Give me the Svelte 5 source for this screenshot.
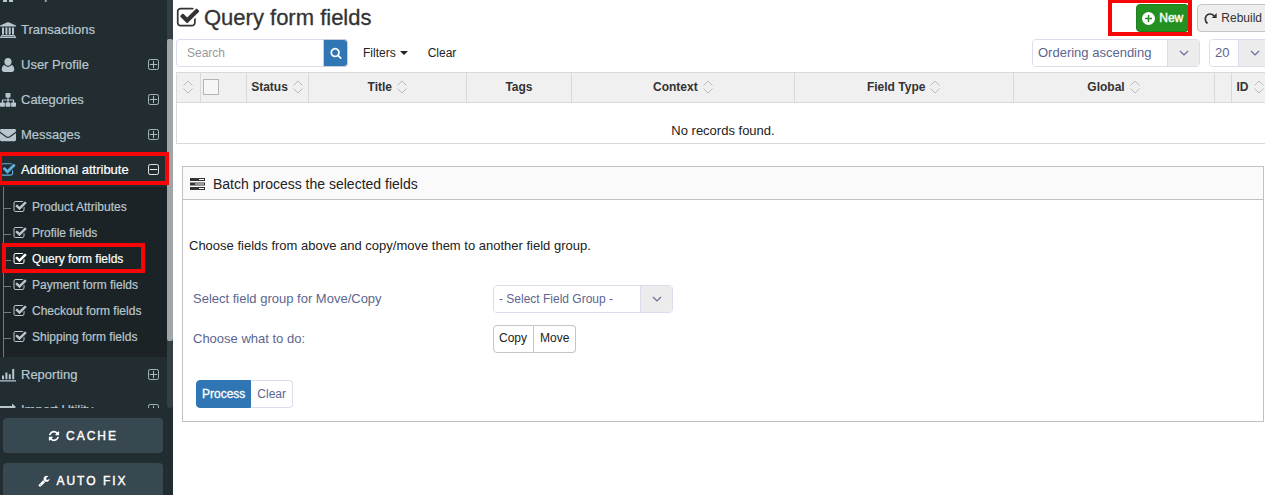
<script>
  const paths = {
    check: 'M1472 930v318q0 119-84.5 203.5t-203.5 84.5h-832q-119 0-203.5-84.5t-84.5-203.5v-832q0-119 84.5-203.5t203.5-84.5h832q63 0 117 25 15 7 18 23 3 17-9 29l-49 49q-10 10-23 10-3 0-9-2-23-6-45-6h-832q-66 0-113 47t-47 113v832q0 66 47 113t113 47h832q66 0 113-47t47-113v-254q0-13 9-22l64-64q10-10 23-10 6 0 12 3 20 8 20 29zm231-489l-814 814q-24 24-57 24t-57-24l-430-430q-24-24-24-57t24-57l110-110q24-24 57-24t57 24l263 263 647-647q24-24 57-24t57 24l110 110q24 24 24 57t-24 57z',
    refresh: 'M1639 1056q0 5-1 7-64 268-268 434.5t-478 166.5q-146 0-282.5-55t-243.5-157l-129 129q-19 19-45 19t-45-19-19-45v-448q0-26 19-45t45-19h448q26 0 45 19t19 45-19 45l-137 137q71 66 161 102t187 36q134 0 250-65t186-179q11-17 53-117 8-23 30-23h192q13 0 22.5 9.5t9.5 22.5zm25-800v448q0 26-19 45t-45 19h-448q-26 0-45-19t-19-45 19-45l138-138q-148-137-349-137-134 0-250 65t-186 179q-11 17-53 117-8 23-30 23h-199q-13 0-22.5-9.5t-9.5-22.5v-7q65-268 270-434.5t480-166.5q146 0 284 55.5t245 156.5l130-129q19-19 45-19t45 19 19 45z',
    wrench: 'M448 1472q0-26-19-45t-45-19-45 19-19 45 19 45 45 19 45-19 19-45zm644-420l-682 682q-37 37-90 37-52 0-91-37l-106-108q-38-36-38-90 0-53 38-91l681-681q39 98 114.5 173.5t173.5 114.5zm634-435q0 39-23 106-47 134-164.5 217.5t-258.5 83.5q-185 0-316.5-131.5t-131.5-316.5 131.5-316.5 316.5-131.5q58 0 121.5 16.5t107.5 46.5q16 11 16 28t-16 28l-293 169v224l193 107q5-3 79-48.5t135.5-81 70.5-35.5q15 0 23.5 10t8.5 25z',
    search: 'M1216 832q0-185-131.5-316.5t-316.5-131.5-316.5 131.5-131.5 316.5 131.5 316.5 316.5 131.5 316.5-131.5 131.5-316.5zm512 832q0 52-38 90t-90 38q-54 0-90-38l-343-342q-179 124-399 124-143 0-273.5-55.5t-225-150-150-225-55.5-273.5 55.5-273.5 150-225 225-150 273.5-55.5 273.5 55.5 225 150 150 225 55.5 273.5q0 220-124 399l343 343q37 37 37 90z'
  };
  // Glyphs drawn on a 16 unit grid
  const small = {
    home: 'M8 2 0 9l1 1 7-6 7 6 1-1zM3 9v6h4v-4h2v4h4V9L8 5z',
    bank: 'M8 0 16 3.5v1H0v-1zM2 5.5h2v7H2zm3.4 0h2v7h-2zm3.300 0h2v7h-2zm3.300 0h2v7h-2zM1 13h14v1H1zm-1 1.400h16V16H0z',
    user: 'M8 1c2.200 0 3.600 1.600 3.600 3.700S10.200 8.800 8 8.800 4.400 6.800 4.400 4.700 5.800 1 8 1zM4.600 8c1 1.200 2 1.800 3.400 1.800s2.400-.6 3.400-1.800c2 .2 2.800 2.300 2.800 4.600 0 1.500-.9 2.400-2.300 2.400H4.100c-1.400 0-2.300-.9-2.300-2.400C1.800 10.300 2.600 8.200 4.600 8z',
    tree: 'M6.200 1h3.600q.7 0 .7.700v3q0 .7-.7.7H8.600v2h4.600q.9 0 .9.900v2.100h1.200q.7 0 .7.700v3q0 .7-.7.700h-3.500q-.7 0-.7-.7v-3q0-.7.7-.7h1.100V8.600H8.600v1.800h1.200q.7 0 .7.700v3q0 .7-.7.700H6.200q-.7 0-.7-.7v-3q0-.7.7-.7h1.200V8.600H3.100v1.800h1.100q.7 0 .7.700v3q0 .7-.7.700H.7q-.7 0-.7-.7v-3q0-.7.7-.7h1.200V8.300q0-.9.900-.9h4.600v-2H6.200q-.7 0-.7-.7v-3q0-.7.700-.7z',
    mail: 'M1.400 2h13.200Q16 2 16 3.400q0 1.200-1.300 2.200L9.300 9.400Q8 10.300 6.700 9.400L1.300 5.600Q0 4.600 0 3.400 0 2 1.400 2zM0 6l5.800 4.200q2.200 1.500 4.400 0L16 6v6.800q0 1.400-1.400 1.400H1.400Q0 14.200 0 12.800z',
    chart: 'M0 13.200h16v1.200H0zM2 8.500h2v3.700H2zm3.400-3h2v6.700h-2zM8.800 7.300h2v4.900h-2zm3.400-5.300h2v10.200h-2z',
    swap: 'M0 4h12V1.500L16 5l-4 3.500V6H0zm16 6H4V7.500L0 11l4 3.500V12h12z'
  };
  const top = [
    { name: 'Shop', icon: 'home' },
    { name: 'Transactions', icon: 'bank' },
    { name: 'User Profile', icon: 'user', more: true },
    { name: 'Categories', icon: 'tree', more: true },
    { name: 'Messages', icon: 'mail', more: true },
    { name: 'Additional attribute', icon: 'check', more: true, open: true },
    { name: 'Reporting', icon: 'chart', more: true },
    { name: 'Import Utility', icon: 'swap', more: true }
  ];
  const sub = ['Product Attributes', 'Profile fields', 'Query form fields', 'Payment form fields', 'Checkout form fields', 'Shipping form fields'];
  const columns = [
    { text: '', width: '24px', sort: true },
    { text: '', width: '46px', box: true },
    { text: 'Status', width: '62px', sort: true },
    { text: 'Title', width: '14.5%', sort: true },
    { text: 'Tags', width: '9.6%' },
    { text: 'Context', width: '20.4%', sort: true },
    { text: 'Field Type', width: '20%', sort: true },
    { text: 'Global', width: 'auto', sort: true },
    { text: '', width: '17px' },
    { text: 'ID', width: '38px', sort: true }
  ];
</script>

{#snippet glyph(name)}
  <svg class="glyph" viewBox={paths[name] ? '0 0 1792 1792' : '0 0 16 16'} aria-hidden="true"><path d={paths[name] ?? small[name]} /></svg>
{/snippet}

{#snippet chevron()}
  <span class="arrow"><svg width="10" height="6" viewBox="0 0 10 6" aria-hidden="true"><path d="M1 1l4 4 4-4" /></svg></span>
{/snippet}

<div class="app">
  <aside>
    <nav>
      <ul class="menu">
        {#each top as item}
          <li>
            <a href="#top" class="item" class:open={item.open}>
              {@render glyph(item.icon)}
              <span class="label">{item.name}</span>
              {#if item.more}
                <svg class="toggle" viewBox="0 0 12 12" aria-hidden="true">
                  <rect x=".5" y=".5" width="11" height="11" rx="2" />
                  <path d={item.open ? 'M2 6h8' : 'M2 6h8M6 2v8'} />
                </svg>
              {/if}
              {#if item.open}<span class="mark mark-parent"></span>{/if}
            </a>
            {#if item.open}
              <ul class="sub">
                {#each sub as name, i}
                  <li>
                    <a href="#sub" class:current={i === 2}>
                      {@render glyph('check')}{name}
                      {#if i === 2}<span class="mark mark-child"></span>{/if}
                    </a>
                  </li>
                {/each}
              </ul>
            {/if}
          </li>
        {/each}
      </ul>
      <span class="track"><span class="thumb"></span></span>
    </nav>
    <div class="tools">
      <button>{@render glyph('refresh')}CACHE</button>
      <button>{@render glyph('wrench')}AUTO FIX</button>
    </div>
  </aside>

  <main>
    <header>
      <h1>{@render glyph('check')}Query form fields</h1>
      <div class="actions">
        <div class="new-wrap">
          <button class="new">
            <svg width="13" height="13" viewBox="0 0 13 13" aria-hidden="true"><circle cx="6.500" cy="6.500" r="6.500" fill="#fff" /><path d="M6.500 3v7M3 6.500h7" stroke="#229122" stroke-width="1.500" /></svg>
            New
          </button>
          <span class="mark mark-new"></span>
        </div>
        <button class="rebuild">
          <svg width="13" height="13" viewBox="0 0 13 13" aria-hidden="true"><path d="M3.500 11.500C-.5 8 1.500 2 6.200 2c1.800 0 3 .8 4 2" fill="none" stroke="#333" stroke-width="1.700" /><path d="M12.700 1v5H7.700z" fill="#333" /></svg>
          Rebuild
        </button>
      </div>
    </header>

    <div class="filters">
      <form class="search">
        <input type="text" placeholder="Search" aria-label="Search" />
        <button type="button" aria-label="Search">{@render glyph('search')}</button>
      </form>
      <button class="plain filter">Filters<span class="caret"></span></button>
      <button class="plain">Clear</button>
      <div class="selects">
        <div class="select ordering">
          <select aria-label="Ordering"><option>Ordering ascending</option></select>
          {@render chevron()}
        </div>
        <div class="select limit">
          <select aria-label="Limit"><option>20</option></select>
          {@render chevron()}
        </div>
      </div>
    </div>

    <table>
      <colgroup>
        {#each columns as c}<col style:width={c.width} />{/each}
      </colgroup>
      <thead>
        <tr>
          {#each columns as c}
            <th>
              <div class="head" class:start={c.box}>
                {#if c.box}<input type="checkbox" aria-label="Check all" />{/if}
                {#if c.text}<span>{c.text}</span>{/if}
                {#if c.sort}
                  <svg width="10" height="14" viewBox="0 0 10 14" aria-hidden="true"><path d="M.5 5.500 5 1l4.500 4.500M.5 8.500 5 13l4.500-4.500" /></svg>
                {/if}
              </div>
            </th>
          {/each}
        </tr>
      </thead>
      <tbody>
        <tr><td colspan="10">No records found.</td></tr>
      </tbody>
    </table>

    <section class="batch">
      <h2>
        <svg width="15" height="12" viewBox="0 0 15 12" aria-hidden="true">
          <path d="M0 0h15v3H0zM0 4.500h15v3H0zM0 9h15v3H0z" fill="#333" />
          <path d="M9 1.500h5M5 6h9M9 10.500h5" stroke="#fafafa" stroke-width="1" />
        </svg>
        Batch process the selected fields
      </h2>
      <div class="content">
        <p>Choose fields from above and copy/move them to another field group.</p>
        <div class="row">
          <label for="group">Select field group for Move/Copy</label>
          <div class="select group">
            <select id="group"><option>- Select Field Group -</option></select>
            {@render chevron()}
          </div>
        </div>
        <div class="row">
          <span id="what">Choose what to do:</span>
          <div class="choice" role="group" aria-labelledby="what">
            <button>Copy</button><button>Move</button>
          </div>
        </div>
        <div class="submit">
          <button class="process">Process</button><button class="clear">Clear</button>
        </div>
      </div>
    </section>
  </main>
</div>

<style>
  :global(body) { margin: 0; overflow: hidden; background: #fff; }
  .app { display: flex; height: 100vh; overflow: hidden; font: 13px/18px "Liberation Sans", Arial, sans-serif; color: #222; }
  .app * { box-sizing: border-box; }
  button, input, select { font: inherit; color: inherit; margin: 0; }
  button { padding: 0; cursor: pointer; }
  ul { list-style: none; margin: 0; padding: 0; }
  a { color: inherit; text-decoration: none; }
  .glyph { fill: currentColor; flex: none; }
  .mark { position: absolute; border: 4px solid #f60606; pointer-events: none; z-index: 2; }

  aside { display: flex; flex-direction: column; flex: none; width: 173px; background: #222d32; color: #b8c7ce; }
  nav { position: relative; flex: 1; min-height: 0; overflow: hidden; -webkit-text-stroke: .2px; }
  .menu { margin-top: -23px; }
  .item { position: relative; display: flex; align-items: center; gap: 5px; height: 35px; padding-right: 14px; }
  .item .glyph { width: 16px; height: 16px; }
  .item .label { flex: 1; }
  .item.open { color: #fff; }
  .item.open .glyph { color: #5fb1dd; }
  .toggle { width: 11px; height: 11px; fill: none; stroke: currentColor; }
  .mark-parent { inset: 0 4px 2px -2px; }
  .sub { position: relative; padding: 7px 0; background: #1c2326; font-size: 12px; }
  .sub::before { content: ''; position: absolute; left: 3px; top: 0; bottom: 0; border-left: 1px solid #747a7c; }
  .sub a { position: relative; display: flex; align-items: center; gap: 5px; height: 26px; padding-left: 13px; }
  .sub a::before { content: ''; position: absolute; left: 4px; top: 14px; width: 7px; border-top: 1px solid #747a7c; }
  .sub .glyph { width: 14px; height: 14px; }
  .sub .current { color: #fff; }
  .mark-child { inset: -3px 28px -1px 2px; }
  .track { position: absolute; top: 0; bottom: 0; right: 0; width: 6px; background: #333f44; border-radius: 0 0 3px 3px; }
  .thumb { display: block; height: 74%; margin-top: 39px; background: #a0a6a8; border-radius: 2px; }
  .tools { display: flex; flex-direction: column; gap: 10px; padding: 10px 10px 0 3px; height: 87px; flex: none; }
  .tools button { display: flex; align-items: center; justify-content: center; gap: 6px; flex: none; height: 35px; border: 0; border-radius: 4px; background: #374850; color: #fff; font-size: 12px; letter-spacing: 2px; -webkit-text-stroke: .4px; }
  .tools .glyph { width: 12px; height: 12px; }

  main { flex: 1; min-width: 0; padding-left: 3px; }
  header { display: flex; align-items: center; justify-content: space-between; height: 36px; margin-right: -5px; }
  h1 { display: flex; align-items: center; gap: 4px; margin: 0; font-size: 22px; line-height: 28px; font-weight: 400; color: #333; -webkit-text-stroke: .3px; }
  h1 .glyph { width: 24px; height: 24px; }
  .actions { display: flex; gap: 8px; font-size: 12px; }
  .actions button { display: flex; align-items: center; gap: 4px; height: 28px; border-radius: 4px; }
  .new-wrap { position: relative; }
  .new { padding: 0 5px; border: 1px solid #1c801c; background: #229122; color: #fff; -webkit-text-stroke: .4px; }
  .mark-new { inset: -5px -3px -4px -28px; }
  .rebuild { padding: 0 7px 0 6px; border: 1px solid #c4c4c4; background: #eee; color: #333; }
  .filters { display: flex; align-items: center; height: 33px; margin: 0 -6px 3px 0; }
  .search { display: flex; }
  .search input { width: 147px; height: 28px; padding: 0 10px; border: 1px solid #dcdcea; border-right: 0; border-radius: 4px 0 0 4px; background: #fff; font-size: 12px; }
  .search input::placeholder { color: #999; opacity: 1; }
  .search button { display: flex; align-items: center; justify-content: center; width: 25px; height: 28px; border: 1px solid #c5cede; border-radius: 0 4px 4px 0; background: #3076b4; color: #fff; }
  .search .glyph { width: 12px; height: 12px; }
  .plain { border: 0; background: none; font-size: 12px; }
  .filter { display: flex; align-items: center; gap: 4px; margin: 0 20px 0 15px; }
  .caret { border: 4px solid transparent; border-top-color: #222; border-bottom: 0; }
  .selects { display: flex; gap: 9px; margin-left: auto; }
  .select { display: grid; height: 28px; border: 1px solid #dcdcea; border-radius: 4px; overflow: hidden; color: #5c6590; }
  .select > * { grid-area: 1 / 1; }
  .select select { width: 100%; height: 26px; padding: 0 36px 0 5px; border: 0; appearance: none; background: #fff; }
  .arrow { display: flex; align-items: center; justify-content: center; justify-self: end; width: 32px; border-left: 1px solid #dcdcea; background: #ececec; pointer-events: none; }
  .arrow path { fill: none; stroke: #666c9c; stroke-width: 1.2; }
  .ordering { width: 168px; }
  .ordering select { font-size: 12px; }
  .limit { width: 62px; }
  .group { width: 180px; }
  .group select { font-size: 12px; }
  .ordering select, .limit select { font-size: 13px; }

  table { width: calc(100% + 5px); table-layout: fixed; border-collapse: collapse; }
  th, td { border: 1px solid #d9d9d9; padding: 0; }
  th { height: 30px; background: #f0f0f0; font-size: 12px; color: #333; }
  .head { display: flex; align-items: center; justify-content: center; gap: 5px; padding-right: 1px; margin-top: -2px; }
  .head svg { fill: none; stroke: #bbb; flex: none; }
  .head.start { justify-content: flex-start; padding-left: 2px; }
  .head input { appearance: none; width: 16px; height: 16px; border: 1px solid #b5b5b5; background: #f6f6f6; }
  td { padding: 19px 0 3px; text-align: center; }

  .batch { margin: 22px 1px 0 6px; border: 1px solid #c1c1c1; }
  h2 { display: flex; align-items: center; gap: 8px; height: 33px; margin: 0; padding: 1px 7px 0; border-bottom: 1px solid #c1c1c1; background: #fafafa; font-size: 14px; font-weight: 400; }
  .content { padding: 37px 6px 13px; }
  p { margin: 0 0 30px; }
  .row { display: grid; grid-template-columns: 300px auto; justify-content: start; align-items: center; height: 28px; margin: 0 0 12px 4px; color: #5c6590; }
  .choice, .submit { display: flex; }
  .choice button { height: 28px; padding: 0 6px 2px; border: 1px solid #c5c5c5; background: #fff; font-size: 12px; color: #222; }
  .choice button:first-child { padding-left: 5px; border-radius: 4px 0 0 4px; }
  .choice button:last-child { border-radius: 0 4px 4px 0; border-left: 0; }
  .submit { margin: 27px 0 0 7px; font-size: 12px; }
  .submit button { height: 28px; padding: 0 6px; border: 1px solid #dcdcea; background: #fff; color: #5c6590; }
  .submit .process { padding: 0 5px; border-color: #3076b4; border-radius: 4px 0 0 4px; background: #3076b4; color: #fff; -webkit-text-stroke: .3px; }
  .submit .clear { border-left: 0; border-radius: 0 4px 4px 0; }
</style>
